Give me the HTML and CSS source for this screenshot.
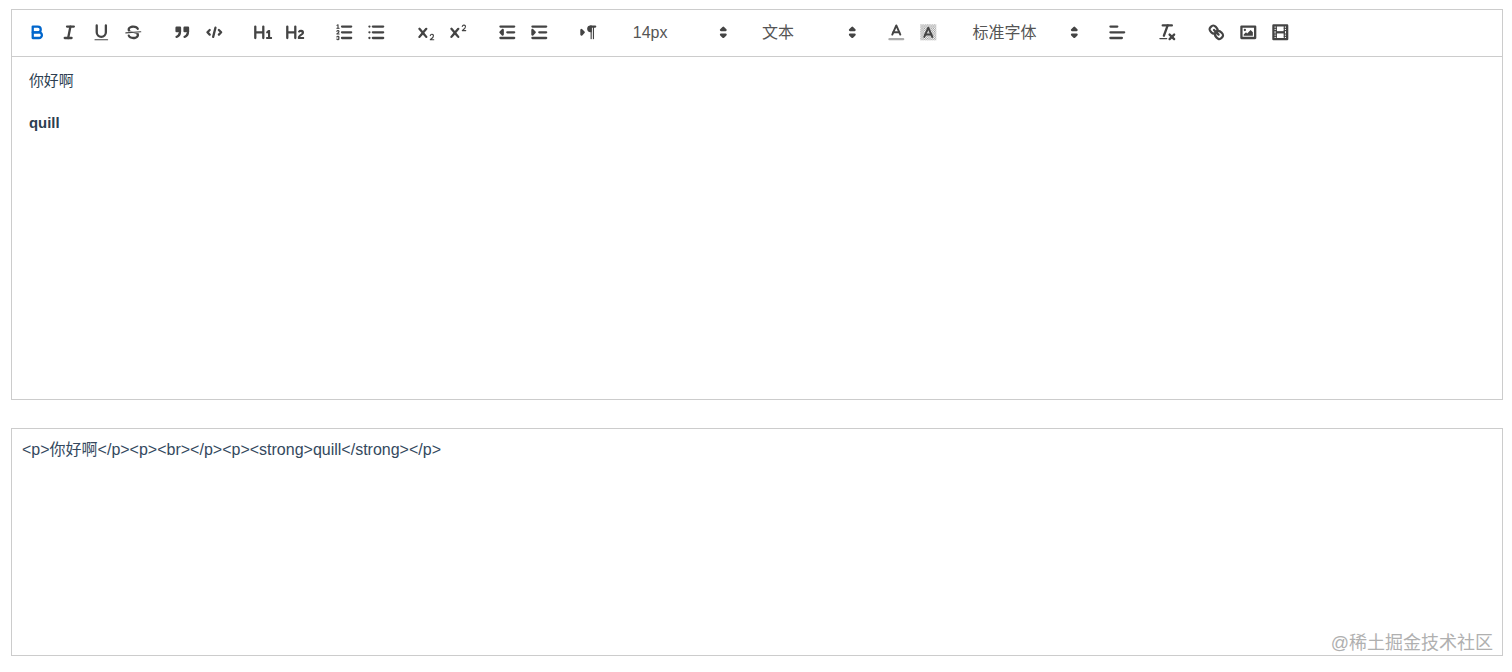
FILE: index.html
```html
<!DOCTYPE html>
<html lang="zh">
<head>
<meta charset="utf-8">
<title>Quill editor</title>
<link rel="stylesheet" href="styles.css">
</head>
<body>
<main class="page">
  <section class="editor">
    <div class="toolbar">
      <span class="formats">
        <button class="btn active"><svg viewBox="0 0 18 18"><path class="s" d="M5,4H9.5A2.5,2.5,0,0,1,12,6.5v0A2.5,2.5,0,0,1,9.5,9H5A0,0,0,0,1,5,9V4A0,0,0,0,1,5,4Z"/><path class="s" d="M5,9h5.5A2.5,2.5,0,0,1,13,11.5v0A2.5,2.5,0,0,1,10.5,14H5a0,0,0,0,1,0,0V9A0,0,0,0,1,5,9Z"/></svg></button>
        <button class="btn"><svg viewBox="0 0 18 18"><line class="s" x1="7" x2="13" y1="4" y2="4"/><line class="s" x1="5" x2="11" y1="14" y2="14"/><line class="s" x1="8" x2="10" y1="14" y2="4"/></svg></button>
        <button class="btn"><svg viewBox="0 0 18 18"><path class="s" d="M5,3V9a4.012,4.012,0,0,0,4,4H9a4.012,4.012,0,0,0,4-4V3"/><rect class="f" height="1" rx="0.5" ry="0.5" width="12" x="3" y="15"/></svg></button>
        <button class="btn"><svg viewBox="0 0 18 18"><line class="s t" x1="15.5" x2="2.5" y1="8.5" y2="9.5"/><path class="f" d="M9.007,8C6.542,7.791,6,7.519,6,6.5,6,5.792,7.283,5,9,5c1.571,0,2.765.679,2.969,1.309a1,1,0,0,0,1.9-.617C13.356,4.106,11.354,3,9,3,6.2,3,4,4.538,4,6.5a3.2,3.2,0,0,0,.5,1.843Z"/><path class="f" d="M8.984,10C11.457,10.208,12,10.479,12,11.5c0,.708-1.283,1.5-3,1.5-1.571,0-2.765-.679-2.969-1.309a1,1,0,1,0-1.9.617C4.644,13.894,6.646,15,9,15c2.8,0,5-1.538,5-3.5a3.2,3.2,0,0,0-.5-1.843Z"/></svg></button>
      </span>
      <span class="formats">
        <button class="btn"><svg viewBox="0 0 18 18"><rect class="f s" height="3" width="3" x="4" y="5"/><rect class="f s" height="3" width="3" x="11" y="5"/><path class="f s" d="M7,8c0,4.031-3,5-3,5"/><path class="f s" d="M14,8c0,4.031-3,5-3,5"/></svg></button>
        <button class="btn"><svg viewBox="0 0 18 18"><polyline class="s" points="5 7 3 9 5 11"/><polyline class="s" points="13 7 15 9 13 11"/><line class="s" x1="10" x2="8" y1="5" y2="13"/></svg></button>
      </span>
      <span class="formats">
        <button class="btn"><svg viewBox="0 0 18 18"><path class="f" d="M10,4V14a1,1,0,0,1-2,0V10H3v4a1,1,0,0,1-2,0V4A1,1,0,0,1,3,4V8H8V4a1,1,0,0,1,2,0Zm6.06787,9.209H14.98975V7.59863a.54085.54085,0,0,0-.605-.60547h-.62744a1.01119,1.01119,0,0,0-.748.29688L11.645,8.56641a.5435.5435,0,0,0-.022.8584l.28613.30762a.53861.53861,0,0,0,.84717.0332l.09912-.08789a1.2137,1.2137,0,0,0,.2417-.35254h.02246s-.01123.30859-.01123.60547V13.209H12.041a.54085.54085,0,0,0-.605.60547v.43945a.54085.54085,0,0,0,.605.60547h4.02686a.54085.54085,0,0,0,.605-.60547v-.43945A.54085.54085,0,0,0,16.06787,13.209Z"/></svg></button>
        <button class="btn"><svg viewBox="0 0 18 18"><path class="f" d="M16.73975,13.81445v.43945a.54085.54085,0,0,1-.605.60547H11.855a.58392.58392,0,0,1-.64893-.60547V14.0127c0-2.90527,3.39941-3.42187,3.39941-4.55469a.77675.77675,0,0,0-.84717-.78125,1.17684,1.17684,0,0,0-.83594.38477c-.2749.26367-.561.374-.85791.13184l-.4292-.34082c-.30811-.24219-.38525-.51758-.1543-.81445a2.97155,2.97155,0,0,1,2.45361-1.17676,2.45393,2.45393,0,0,1,2.68408,2.40918c0,2.45312-3.1792,2.92676-3.27832,3.93848h2.79443A.54085.54085,0,0,1,16.73975,13.81445ZM9,3A.99974.99974,0,0,0,8,4V8H3V4A1,1,0,0,0,1,4V14a1,1,0,0,0,2,0V10H8v4a1,1,0,0,0,2,0V4A.99974.99974,0,0,0,9,3Z"/></svg></button>
      </span>
      <span class="formats">
        <button class="btn"><svg viewBox="0 0 18 18"><line class="s" x1="7" x2="15" y1="4" y2="4"/><line class="s" x1="7" x2="15" y1="9" y2="9"/><line class="s" x1="7" x2="15" y1="14" y2="14"/><line class="s t" x1="2.5" x2="4.5" y1="5.5" y2="5.5"/><path class="f" d="M3.5,6A0.5,0.5,0,0,1,3,5.5V3.085l-0.276.138A0.5,0.5,0,0,1,2.053,3c-0.124-.247-0.023-0.324.224-0.447l1-.5A0.5,0.5,0,0,1,4,2.5v3A0.5,0.5,0,0,1,3.5,6Z"/><path class="s t" d="M4.5,10.5h-2c0-.234,1.85-1.076,1.85-2.234A0.959,0.959,0,0,0,2.5,8.156"/><path class="s t" d="M2.5,14.846a0.959,0.959,0,0,0,1.85-.109A0.7,0.7,0,0,0,3.75,14a0.688,0.688,0,0,0,.6-0.736,0.959,0.959,0,0,0-1.85-.109"/></svg></button>
        <button class="btn"><svg viewBox="0 0 18 18"><line class="s" x1="6" x2="15" y1="4" y2="4"/><line class="s" x1="6" x2="15" y1="9" y2="9"/><line class="s" x1="6" x2="15" y1="14" y2="14"/><line class="s" x1="3" x2="3" y1="4" y2="4"/><line class="s" x1="3" x2="3" y1="9" y2="9"/><line class="s" x1="3" x2="3" y1="14" y2="14"/></svg></button>
      </span>
      <span class="formats">
        <button class="btn"><svg viewBox="0 0 18 18"><path class="f" d="M15.5,15H13.861a3.858,3.858,0,0,0,1.914-2.975,1.8,1.8,0,0,0-1.6-1.751A1.921,1.921,0,0,0,12.021,11.7a0.50013,0.50013,0,1,0,.957.291h0a0.914,0.914,0,0,1,1.053-.725,0.81,0.81,0,0,1,.744.762c0,1.076-1.16971,1.86982-1.93971,2.43082A1.45639,1.45639,0,0,0,12,15.5a0.5,0.5,0,0,0,.5.5h3A0.5,0.5,0,0,0,15.5,15Z"/><path class="f" d="M9.65,5.241a1,1,0,0,0-1.409.108L6,7.964,3.759,5.349A1,1,0,0,0,2.192,6.59178Q2.21541,6.6213,2.241,6.649L4.684,9.5,2.241,12.35A1,1,0,0,0,3.71,13.70722q0.02557-.02768.049-0.05722L6,11.036,8.241,13.65a1,1,0,1,0,1.567-1.24277Q9.78459,12.3777,9.759,12.35L7.316,9.5,9.759,6.651A1,1,0,0,0,9.65,5.241Z"/></svg></button>
        <button class="btn"><svg viewBox="0 0 18 18"><path class="f" d="M15.5,7H13.861a4.015,4.015,0,0,0,1.914-2.975,1.8,1.8,0,0,0-1.6-1.751A1.922,1.922,0,0,0,12.021,3.7a0.5,0.5,0,1,0,.957.291,0.917,0.917,0,0,1,1.053-.725,0.81,0.81,0,0,1,.744.762c0,1.077-1.164,1.925-1.934,2.486A1.423,1.423,0,0,0,12,7.5a0.5,0.5,0,0,0,.5.5h3A0.5,0.5,0,0,0,15.5,7Z"/><path class="f" d="M9.651,5.241a1,1,0,0,0-1.41.108L6,7.964,3.759,5.349a1,1,0,1,0-1.519,1.3L4.683,9.5,2.241,12.35a1,1,0,1,0,1.519,1.3L6,11.036l2.241,2.616a1,1,0,0,0,1.519-1.3L7.317,9.5,9.759,6.651A1,1,0,0,0,9.651,5.241Z"/></svg></button>
      </span>
      <span class="formats">
        <button class="btn"><svg viewBox="0 0 18 18"><line class="s" x1="3" x2="15" y1="14" y2="14"/><line class="s" x1="3" x2="15" y1="4" y2="4"/><line class="s" x1="9" x2="15" y1="9" y2="9"/><polyline class="f s" points="5 7 5 11 3 9 5 7"/></svg></button>
        <button class="btn"><svg viewBox="0 0 18 18"><line class="s" x1="3" x2="15" y1="14" y2="14"/><line class="s" x1="3" x2="15" y1="4" y2="4"/><line class="s" x1="9" x2="15" y1="9" y2="9"/><polyline class="f s" points="3 7 3 11 5 9 3 7"/></svg></button>
      </span>
      <span class="formats">
        <button class="btn"><svg viewBox="0 0 18 18"><polygon class="s f" points="3 11 5 9 3 7 3 11"/><line class="s f" x1="15" x2="11" y1="4" y2="4"/><path class="f" d="M11,3a3,3,0,0,0,0,6h1V3H11Z"/><rect class="f" height="11" width="1" x="11" y="4"/><rect class="f" height="11" width="1" x="13" y="4"/></svg></button>
      </span>
      <span class="formats">
        <span class="picker picker-md"><span>14px</span><svg viewBox="0 0 18 18"><polygon class="s" points="7 11 9 13 11 11 7 11"/><polygon class="s" points="7 7 9 5 11 7 7 7"/></svg></span>
      </span>
      <span class="formats">
        <span class="picker picker-md"><span class="cjk">文本</span><svg viewBox="0 0 18 18"><polygon class="s" points="7 11 9 13 11 11 7 11"/><polygon class="s" points="7 7 9 5 11 7 7 7"/></svg></span>
      </span>
      <span class="formats">
        <button class="btn"><svg viewBox="0 0 18 18"><line class="s faint" x1="3" x2="15" y1="15" y2="15"/><polyline class="s m" points="5.5 11 9 3 12.5 11"/><line class="s m" x1="11.63" x2="6.38" y1="9" y2="9"/></svg></button>
        <button class="btn"><svg viewBox="0 0 18 18"><defs><pattern id="dither" width="2" height="2" patternUnits="userSpaceOnUse"><rect class="f" width="1" height="1"/><rect class="f" x="1" y="1" width="1" height="1"/></pattern></defs><rect class="dither" x="2" y="2" width="14" height="14"/><polyline class="s m" points="5.5 13 9 5 12.5 13"/><line class="s m" x1="11.63" x2="6.38" y1="11" y2="11"/></svg></button>
      </span>
      <span class="formats">
        <span class="picker picker-lg"><span class="cjk">标准字体</span><svg viewBox="0 0 18 18"><polygon class="s" points="7 11 9 13 11 11 7 11"/><polygon class="s" points="7 7 9 5 11 7 7 7"/></svg></span>
      </span>
      <span class="formats">
        <button class="btn"><svg viewBox="0 0 18 18"><line class="s" x1="3" x2="15" y1="9" y2="9"/><line class="s" x1="3" x2="13" y1="14" y2="14"/><line class="s" x1="3" x2="9" y1="4" y2="4"/></svg></button>
      </span>
      <span class="formats">
        <button class="btn"><svg viewBox="0 0 18 18"><line class="s" x1="5" x2="13" y1="3" y2="3"/><line class="s" x1="6" x2="9.35" y1="12" y2="3"/><line class="s" x1="11" x2="15" y1="11" y2="15"/><line class="s" x1="15" x2="11" y1="11" y2="15"/><rect class="f" height="1" rx="0.5" ry="0.5" width="7" x="2" y="14"/></svg></button>
      </span>
      <span class="formats">
        <button class="btn"><svg viewBox="0 0 18 18"><line class="s" x1="7" x2="11" y1="7" y2="11"/><path class="s" d="M8.9,4.577a3.476,3.476,0,0,1,.36,4.679A3.476,3.476,0,0,1,4.577,8.9C3.185,7.5,2.035,6.4,4.217,4.217S7.5,3.185,8.9,4.577Z"/><path class="s" d="M13.423,9.1a3.476,3.476,0,0,0-4.679-.36,3.476,3.476,0,0,0,.36,4.679c1.392,1.392,2.5,2.542,4.679.36S14.815,10.5,13.423,9.1Z"/></svg></button>
        <button class="btn"><svg viewBox="0 0 18 18"><rect class="s" height="10" width="12" x="3" y="4"/><circle class="f" cx="6" cy="7" r="1"/><polyline class="f" points="5 12 5 11 7 9 8 10 11 7 13 9 13 12 5 12"/></svg></button>
        <button class="btn"><svg viewBox="0 0 18 18"><rect class="s" height="12" width="12" x="3" y="3"/><rect class="f" height="12" width="1" x="5" y="3"/><rect class="f" height="12" width="1" x="12" y="3"/><rect class="f" height="2" width="8" x="5" y="8"/><rect class="f" height="1" width="3" x="3" y="5"/><rect class="f" height="1" width="3" x="3" y="7"/><rect class="f" height="1" width="3" x="3" y="10"/><rect class="f" height="1" width="3" x="3" y="12"/><rect class="f" height="1" width="3" x="12" y="5"/><rect class="f" height="1" width="3" x="12" y="7"/><rect class="f" height="1" width="3" x="12" y="10"/><rect class="f" height="1" width="3" x="12" y="12"/></svg></button>
      </span>
    </div>
    <div class="content">
      <p>你好啊</p>
      <p><br></p>
      <p><strong>quill</strong></p>
    </div>
  </section>
  <section class="output">&lt;p&gt;你好啊&lt;/p&gt;&lt;p&gt;&lt;br&gt;&lt;/p&gt;&lt;p&gt;&lt;strong&gt;quill&lt;/strong&gt;&lt;/p&gt;</section>
</main>
<div class="watermark">@稀土掘金技术社区</div>
</body>
</html>
```

FILE: styles.css
```css
* { box-sizing: border-box; }

html, body { margin: 0; padding: 0; background: #fff; }

body {
  position: relative;
  height: 672px;
  overflow: hidden;
  font-family: "Liberation Sans", "Noto Sans CJK SC", sans-serif;
}

.page {
  padding: 9px 9px 0 11px;
  display: flex;
  flex-direction: column;
  gap: 28px;
}

.editor {
  height: 391px;
  border: 1px solid #ccc;
  display: flex;
  flex-direction: column;
}

.toolbar {
  height: 47px;
  padding: 9px 9px 0;
  border-bottom: 1px solid #ccc;
  display: flex;
  align-items: flex-start;
}

.formats {
  display: flex;
  margin-right: 17.25px;
}

.btn {
  width: 32px;
  height: 27px;
  padding: 3px 5.7px;
  border: 0;
  background: none;
  display: block;
}

.btn svg {
  display: block;
  width: 20.6px;
  height: 20.6px;
}

.s {
  fill: none;
  stroke: #444;
  stroke-width: 2;
  stroke-linecap: round;
  stroke-linejoin: round;
}

.t { stroke-width: 1; }
.m { stroke-width: 1.7; }
.f { fill: #444; }
.s.f { fill: #444; }
.faint { opacity: 0.45; }
.dither { fill: url(#dither); opacity: 0.55; }

.active .s { stroke: #06c; }

.picker {
  height: 27px;
  display: flex;
  align-items: center;
  justify-content: space-between;
  padding-left: 11px;
  font-size: 16px;
  font-weight: 400;
  color: #555;
}

.cjk { padding-bottom: 3px; }

.picker svg {
  width: 20.6px;
  height: 20.6px;
  flex: none;
}

.picker-md { width: 112px; }
.picker-lg { width: 123px; }

.content {
  flex: 1;
  padding: 14px 17px;
  font-size: 14.86px;
  line-height: 21.1px;
  color: #2c3e50;
}

.content p { margin: 0; }

.output {
  height: 228px;
  border: 1px solid #ccc;
  padding: 10px;
  font-size: 16px;
  line-height: 22px;
  color: #34495e;
}

.watermark {
  position: absolute;
  right: 19px;
  top: 631px;
  font-size: 18px;
  line-height: 24px;
  color: #b0b0b0;
  white-space: nowrap;
}
```
